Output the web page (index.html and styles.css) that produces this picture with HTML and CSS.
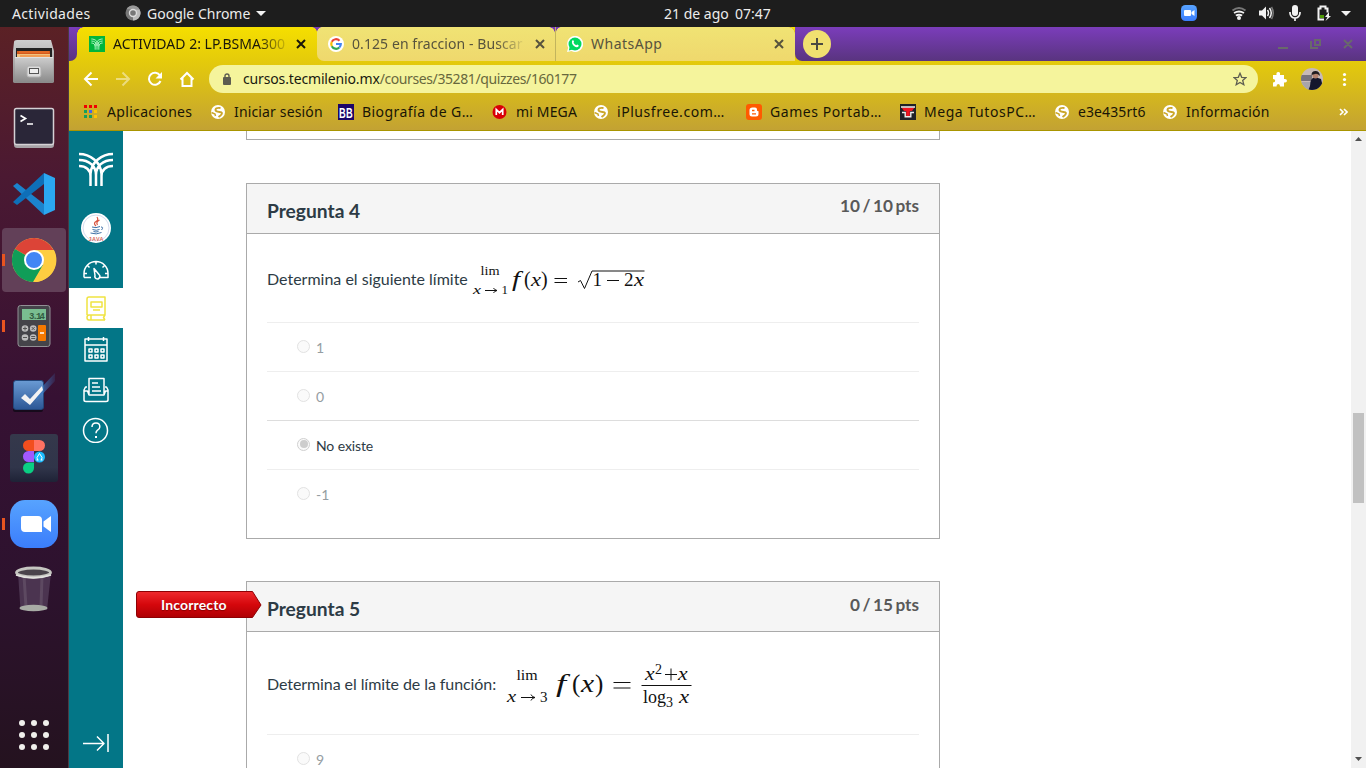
FILE: index.html
```html
<!DOCTYPE html>
<html lang="es">
<head>
<meta charset="utf-8">
<title>ACTIVIDAD 2: LP.BSMA300</title>
<link rel="stylesheet" href="styles.css">
</head>
<body>
<svg width="0" height="0" class="defs"><defs>
<linearGradient id="metal" x2="0" y2="1"><stop stop-color="#cecece"/><stop offset="1" stop-color="#8b8b8b"/></linearGradient>
<linearGradient id="blue" x2="0" y2="1"><stop stop-color="#57a3ff"/><stop offset="1" stop-color="#3b7dfb"/></linearGradient>
<linearGradient id="check" x2="0" y2="1"><stop stop-color="#6a9bd4"/><stop offset="1" stop-color="#2c5795"/></linearGradient>
<linearGradient id="trail"><stop stop-color="#3c78c0"/><stop offset="1" stop-color="#3c78c0" stop-opacity=".15"/></linearGradient>
<linearGradient id="fig" x2="0" y2="1"><stop stop-color="#35384b"/><stop offset=".7" stop-color="#30354a"/><stop offset="1" stop-color="#1e2236"/></linearGradient>
<symbol id="globe" viewBox="0 0 16 16"><circle cx="8" cy="8" r="7" fill="#fff"/><path d="M10.500 4Q6 3.500 5.500 5.500T9.500 8t1 3.500L8.500 13" fill="none" stroke="#cba72a" stroke-width="1.900"/><path d="m1.500 8.500 3.500 1.500.5 2" fill="none" stroke="#cba72a" stroke-width="1.500"/></symbol>
<symbol id="close" viewBox="0 0 10 10"><path d="m1 1 8 8m0-8-8 8" fill="none" stroke="currentColor" stroke-width="2"/></symbol>
<symbol id="palm" viewBox="0 0 34 36"><g fill="none" stroke="currentColor" stroke-width="2.500"><path d="M0 3c11 0 22 8 22.500 20v12M34 3C23 3 12 11 11.500 23v12M0 9c10 0 17 6 17 15v11M34 9c-10 0-17 6-17 15M0 15c7 0 11.500 4 11.500 10M34 15c-7 0-11.500 4-11.500 10"/></g></symbol>
</defs></svg>

<header class="topbar">
  <span class="activities">Actividades</span>
  <svg class="app-icon" width="16" height="16"><circle cx="8" cy="8" r="7.500" fill="#777"/><path d="M8 8V15.500A7.500 7.500 0 0 0 14.500 4.200H8z" fill="#bbb"/><path d="M1.500 4.200A7.500 7.500 0 0 1 14.500 4.200H8z" fill="#999"/><circle cx="8" cy="8" r="3.500" fill="#777" stroke="#ddd" stroke-width="1.400"/></svg>
  <span class="app-name">Google Chrome</span>
  <svg class="caret" width="10" height="6"><path d="M0 0h10L5 5z" fill="#f2f2f2"/></svg>
  <span class="date">21 de ago</span><span class="time">07:47</span>
  <svg class="tray" width="186" height="26" viewBox="1180 0 186 26">
    <rect x="1181" y="5" width="16" height="16" rx="4.500" fill="url(#blue)"/><rect x="1184" y="10" width="7" height="6" rx="1" fill="#fff"/><path d="m1191.500 12 3-2v6l-3-2z" fill="#fff"/>
    <g fill="none" stroke="#f2f2f2" stroke-width="1.800"><path d="M1232.500 10.500q6.500-5 13 0" stroke="#777"/><path d="M1234 13q5-3 10 0M1235.800 15.500q3.200-1.500 6.400 0"/></g><circle cx="1239" cy="18" r="2" fill="#f2f2f2"/>
    <path d="M1259 10.500h3l4-4v13l-4-4h-3z" fill="#f2f2f2"/><path d="M1267.500 10q2 3 0 6M1269.500 8q3.500 5 0 10" fill="none" stroke="#f2f2f2" stroke-width="1.500"/><path d="M1271.500 7q3.500 6 0 12" fill="none" stroke="#777" stroke-width="1.500"/>
    <rect x="1292" y="5" width="6" height="11" rx="3" fill="#f2f2f2"/><path d="M1290 12v1a5 5 0 0 0 10 0v-1M1295 18v3" fill="none" stroke="#f2f2f2" stroke-width="1.700"/>
    <path d="M1324 19.500h-5.500V8.500h2v-2h5v2h2v4" fill="none" stroke="#f2f2f2" stroke-width="2"/><rect x="1320" y="15" width="4" height="3" fill="#4e9a06"/><path d="m1329 12-4 5h2.500l-2 4 5.500-5h-2z" fill="#f2f2f2"/>
    <path d="M1341 11h10l-5 5z" fill="#f2f2f2"/>
  </svg>
</header>

<div class="desktop">
<nav class="dock">
  <svg class="tile" viewBox="2 30 64 64"><path d="M17 40h34l3 11v31a2 2 0 0 1-2 1H15a2 2 0 0 1-2-1V51l1-9q0-2 3-2z" fill="url(#metal)"/><path d="M16 48h36v10H16z" fill="#222"/><path d="M17 51h33v7H17z" fill="#d35a1e"/><path d="M17 54h33v4H17z" fill="#f2c27d"/><path d="M19 52h30M20 56h30" stroke="#f47b2c"/><path d="M15 57h38v25H15z" fill="url(#metal)"/><path d="M15 57.500h38" stroke="#e2e2e2"/><rect x="27" y="66" width="14" height="11" rx="2" fill="#ddd" stroke="#b0b0b0"/><rect x="29.500" y="68.500" width="9" height="5" fill="#eee" stroke="#555"/></svg>
  <svg class="tile" viewBox="2 96 64 64"><rect x="14" y="109" width="40" height="39" rx="3" fill="#a7a3a7"/><rect x="14.500" y="108.500" width="39" height="36" rx="2" fill="#2a2638" stroke="#d5d1d5" stroke-width="1.500"/><path d="m20.500 115.500 5 3-5 3M27 124h6" fill="none" stroke="#fff" stroke-width="1.700"/></svg>
  <svg class="tile" viewBox="2 162 64 64"><path d="m13 186 4-3 27 21v11z" fill="#1b83cd"/><path d="m13 202 4 3 27-21v-11z" fill="#0e6fb8"/><path d="m44 173 11 5v32l-11 5z" fill="#2ba7f1"/></svg>
  <svg class="tile active" viewBox="2 228 64 64"><circle cx="34" cy="260" r="22" fill="#fc4"/><path d="M34 260 14.900 249A22 22 0 0 1 53.500 250H34z" fill="#dc4437"/><path d="M34 260 14.900 249A22 22 0 0 0 33 282l10-17z" fill="#109d58"/><path d="m34 250 20 0a22 22 0 0 1-20 32l9-17z" fill="#fecd41"/><circle cx="34" cy="260" r="10" fill="#fff"/><circle cx="34" cy="260" r="8" fill="#4286f5"/><path class="run" d="M2 254h3v12H2z"/></svg>
  <svg class="tile" viewBox="2 294 64 64"><rect x="18" y="305.500" width="32" height="41" rx="2.500" fill="#45444a" stroke="#929095"/><rect x="22" y="309" width="24" height="11" fill="#79bd90"/><text x="29" y="318.500" textLength="16" class="lcd">3.14</text><g fill="#bdbcbd"><circle cx="25" cy="328.500" r="3.300"/><circle cx="33.200" cy="328.500" r="3.300"/><circle cx="25" cy="337.500" r="3.300"/><circle cx="33.200" cy="337.500" r="3.300"/></g><path d="M23 328.500h4m-2-2v4M31.700 327l3 3m0-3-3 3M23 337.500h4M31.200 336.500h4m-4 2h4" stroke="#555" fill="none"/><rect x="38" y="325" width="8" height="16" rx="1" fill="#f57900"/><path d="M40 333h4" stroke="#fff" stroke-width="1.500"/><path class="run" d="M2 320h3v12H2z"/></svg>
  <svg class="tile" viewBox="2 360 64 64"><rect x="13" y="408" width="30" height="4" rx="2" fill="#160a1b"/><rect x="13.500" y="380.500" width="30" height="29" rx="2.500" fill="url(#check)" stroke="#23477a"/><path d="m40 389 15-16v8L36 401z" fill="url(#trail)"/><path d="m21 398 4-4 5 5 12-13 1 4-13 15z" fill="#f3f3f3"/></svg>
  <svg class="tile" viewBox="2 426 64 64"><rect x="10" y="434" width="48" height="48" rx="3" fill="url(#fig)"/><path d="M34 440h-5.500a5.500 5.500 0 0 0 0 11H34z" fill="#f24e1e"/><path d="M34 440h5.500a5.500 5.500 0 0 1 0 11H34z" fill="#ff7262"/><path d="M34 451h-5.500a5.500 5.500 0 0 0 0 11H34z" fill="#a259ff"/><circle cx="39.500" cy="457" r="5.500" fill="#1abcfe"/><path d="M34 462.500h-5.500a5.500 5.500 0 1 0 5.500 5.500z" fill="#0acf83"/><path d="m39.500 453.500-2.500 4 .5 2.500M39.500 453.500l2.500 4-.5 2.500M36.500 460h2M40.500 460h2" fill="none" stroke="#fff"/></svg>
  <svg class="tile" viewBox="2 492 64 64"><rect x="10" y="500" width="48" height="48" rx="15" fill="url(#blue)"/><path d="M21 516h17q4 0 4 4v12H25q-4 0-4-4v-10q0-2 2-2z" fill="#fff"/><path d="m43.500 521.500 7.500-5.500v16l-7.500-5.500z" fill="#fff"/><path class="run" d="M2 518h3v12H2z"/></svg>
  <svg class="tile" viewBox="2 558 64 64"><path d="m18 573 2.500 37h26.500L51 573z" fill="#4b3450"/><path d="m24 576 2 31m16-31-1 31" stroke="#5d4961" stroke-width="3"/><ellipse cx="33.500" cy="608" rx="14" ry="3.300" fill="#a8aba5"/><ellipse cx="33.500" cy="572.500" rx="17" ry="4.500" fill="#4a444b" stroke="#c6c6c1" stroke-width="2.800"/><path d="M16 575q17 6 35 0" fill="none" stroke="#e3e3df" stroke-width="1.500"/></svg>
  <svg class="apps" width="32" height="32"><g fill="#f0eeec"><circle cx="4" cy="4" r="3"/><circle cx="16" cy="4" r="3"/><circle cx="28" cy="4" r="3"/><circle cx="4" cy="16" r="3"/><circle cx="16" cy="16" r="3"/><circle cx="28" cy="16" r="3"/><circle cx="4" cy="28" r="3"/><circle cx="16" cy="28" r="3"/><circle cx="28" cy="28" r="3"/></g></svg>
</nav>

<section class="browser">
<div class="chrome">
  <div class="tabs">
    <div class="corner"></div>
    <div class="tab current"><svg width="16" height="16" class="palm-fav"><rect width="16" height="16" fill="#00b53c"/><use href="#palm" x="2" y="2" width="12" height="12"/></svg><span class="tab-title t1">ACTIVIDAD 2: LP.BSMA300</span><svg class="x" width="10" height="10"><use href="#close"/></svg></div>
    <div class="tab second"><svg width="16" height="16"><circle cx="8" cy="8" r="8" fill="#fff"/><g fill="none" stroke-width="2.200"><path d="M11.500 4.700A4.800 4.800 0 0 0 3.800 5.800" stroke="#ea4335"/><path d="M3.800 5.800a4.800 4.800 0 0 0 0 4.400" stroke="#fbbc05"/><path d="M3.800 10.200a4.800 4.800 0 0 0 7.500 1.300" stroke="#34a853"/><path d="M11.300 11.500A5 5 0 0 0 12.800 8H8" stroke="#4285f4"/></g></svg><span class="tab-title t2">0.125 en fraccion - Buscar</span><svg class="x" width="10" height="10"><use href="#close"/></svg></div>
    <div class="tab third"><svg width="16" height="16"><path d="M0 16 1.200 11.800A8 8 0 1 1 4.500 15z" fill="#fff"/><circle cx="8" cy="8" r="6.500" fill="#00d95f"/><path d="M1.800 14.400 2.900 10l3 3.500z" fill="#00d95f"/><path d="M5.200 4.500q1.300-.9 1.800 1l-.4 1.200q.8 1.700 2.600 2.500l1.100-.7q2 .7 1.300 1.800-1.500 1.700-4.300 0Q4 7.500 5.200 4.500z" fill="#fff"/></svg><span class="tab-title t3">WhatsApp</span><svg class="x" width="10" height="10"><use href="#close"/></svg></div>
    <div class="tab-rest">
      <svg class="plus" width="28" height="28"><circle cx="14" cy="14" r="14" fill="#f0e070"/><path d="M14 8v12M8 14h12" stroke="#4a4a42" stroke-width="2"/></svg>
      <svg class="win" width="76" height="12" viewBox="0 0 76 12"><g fill="none" stroke="#69696b" stroke-width="2"><path d="M0 10h10M37 2h5v5h-5zM33 3v7h7M66 2l8 8m0-8-8 8"/></g></svg>
    </div>
  </div>
  <div class="toolbar">
    <svg class="navs" width="128" height="36" viewBox="69 61 128 36"><g fill="none" stroke="#fff" stroke-width="2"><path d="M98 79H85m6.500-6.500L85 79l6.500 6.500"/><path d="M116 79h13m-6.500-6.500L129 79l-6.500 6.500" opacity=".45"/><path d="M160 75.500A6 6 0 1 0 160.500 81"/><path d="M180.500 79.500 187 73l6.500 6.500M182.500 78v8h9v-8"/></g><path d="M162 72v6.500h-6.500z" fill="#fff"/></svg>
    <div class="omnibox"><svg width="10" height="12"><rect y="4" width="8" height="8" rx="1" fill="#5d5d50"/><path d="M2 5V3a2 2 0 0 1 4 0v2" fill="none" stroke="#5d5d50" stroke-width="1.400"/></svg><span class="url"><b>cursos.tecmilenio.mx</b>/courses/35281/quizzes/160177</span><svg class="star" width="14" height="14" viewBox="0 0 14 14"><path d="m7 1.300 1.700 4 4.300.3-3.300 2.800 1.100 4.300L7 10.400l-3.800 2.300 1.100-4.300L1 5.600l4.300-.3z" fill="none" stroke="#5d5d50" stroke-width="1.300"/></svg></div>
    <svg class="tools" width="108" height="36" viewBox="1258 61 108 36"><path d="M1273 75h3.500q-.5-3 1.800-3t1.700 3h4v4q3-.5 3 1.800t-3 1.700v4h-4q.2-2.500-1.700-2.500t-1.800 2.500H1273v-4q2.200 0 2.200-1.700t-2.200-1.800z" fill="#fff"/><clipPath id="ava"><circle cx="1312" cy="79" r="11"/></clipPath><g clip-path="url(#ava)"><path d="M1300 67h24v24h-24z" fill="#c7b9b8"/><path d="M1300 75h12v6h-12z" fill="#77727c"/><path d="M1300 82h11v9h-11z" fill="#a8a5aa"/><path d="M1310 86q0-8 5-9l6 2 3 12h-16z" fill="#15162d"/><circle cx="1315.500" cy="75.500" r="3" fill="#b58270"/><path d="M1311.500 75q0-4 4-4t4.500 5q-3-3-5-2z" fill="#211c22"/></g><g fill="#fff"><circle cx="1344.500" cy="74.500" r="1.600"/><circle cx="1344.500" cy="79.500" r="1.600"/><circle cx="1344.500" cy="84.500" r="1.600"/></g></svg>
  </div>
  <div class="bookmarks">
    <div class="bm b1"><svg width="14" height="14"><g><path d="M1 0h3v3H1zM6 0h3v3H6zM11 0h3v3h-3z" fill="#f00000"/><path d="M1 5h3v3H1zM1 10h3v3H1zM6 10h3v3H6z" fill="#16a05d"/><path d="M6 5h3v3H6z" fill="#4865e8"/><path d="M11 5h3v3h-3zM11 10h3v3h-3z" fill="#ffc400"/></g></svg><span>Aplicaciones</span></div>
    <div class="bm b2"><svg width="16" height="16"><use href="#globe"/></svg><span>Iniciar sesión</span></div>
    <div class="bm b3"><svg width="16" height="16"><rect width="16" height="16" fill="#1b0569"/><text x="1" y="14" textLength="14" lengthAdjust="spacingAndGlyphs" class="bb">BB</text></svg><span>Biografía de G…</span></div>
    <div class="bm b4"><svg width="15" height="16"><circle cx="7.500" cy="8" r="7" fill="#d90007"/><path d="M4.300 11V5.500L7.500 8.700l3.200-3.200V11" fill="none" stroke="#fff" stroke-width="1.700"/></svg><span>mi MEGA</span></div>
    <div class="bm b5"><svg width="16" height="16"><use href="#globe"/></svg><span>iPlusfree.com…</span></div>
    <div class="bm b6"><svg width="16" height="16"><rect width="16" height="16" rx="3" fill="#ff5a00"/><path d="M6.500 3.500H9q2 0 2 2v1q0 .7 1.500.8v2.700q0 2.500-2.500 2.500H6q-2.500 0-2.500-2.500V6q0-2.500 3-2.500z" fill="#fff"/><path d="M6 6.500h2.500M6 9.800h4" stroke="#ff5a00" stroke-width="1.300"/></svg><span>Games Portab…</span></div>
    <div class="bm b7"><svg width="16" height="16"><rect width="16" height="16" fill="#202127"/><path d="M1.500 3.500h13L12 7H9.800v5H6.200V7H4z" fill="#f01622"/><path d="M1 3h14M2 8.500h3.200v4.200h5.600V8.500H14" stroke="#eee" stroke-width="1.400" fill="none"/></svg><span>Mega TutosPC…</span></div>
    <div class="bm b8"><svg width="16" height="16"><use href="#globe"/></svg><span>e3e435rt6</span></div>
    <div class="bm b9"><svg width="16" height="16"><use href="#globe"/></svg><span>Información</span></div>
    <svg class="more" width="9" height="8"><path d="m1 1 3 3-3 3m4-6 3 3-3 3" fill="none" stroke="#fff" stroke-width="1.600"/></svg>
  </div>
</div>

<div class="page">
  <nav class="rail">
    <svg class="brand" width="34" height="36"><use href="#palm"/></svg>
    <div class="cell avatar"><svg width="30" height="30"><circle cx="15" cy="15" r="15" fill="#fff"/><circle cx="15" cy="15" r="13" fill="none" stroke="#d7dcee"/><path d="M16 4q2 3-1 4.500t0 4.500M18.500 7q-4 2-2 5" fill="none" stroke="#d8543f" stroke-width="1.200"/><path d="M11 14q4 1.500 8-.500M11.500 16.500q4 1.500 7 0M12.500 18.500q2.500 1 5 0M9.500 20q6 2 11-.5M20 14q3 0 .5 3" fill="none" stroke="#3f72a7"/><text x="7.500" y="27.500" textLength="15" class="java">JAVA</text></svg></div>
    <div class="cell"><svg width="28" height="28" viewBox="82 255.500 28 28" class="line"><path d="M84 279v-4a12 12 0 0 1 24 0v4h-8M84 279h7M96 263v3M87.500 267l2 2M104.500 267l-2 2M84 275h3M105 275h3M94 270l1 7a2.500 2.500 0 1 0 4-1z"/></svg></div>
    <div class="cell selected"><svg width="28" height="28" viewBox="82 294 28 28" class="line"><path d="M87 315V299q0-2 2-2h16v18H89q-2 0-2 2.500t2 2.500h16M105 315l-1.500 2.500 1.500 2.500M91 315v5M91 302h11v5H91zM93 310h7"/></svg></div>
    <div class="cell"><svg width="28" height="28" viewBox="82 334 28 28" class="line"><path d="M85 339h22v22H85zM85 345h22M88.500 337v4M103.500 337v4"/><path d="M89 349h3v3h-3zm6 0h3v3h-3zm6 0h3v3h-3zM89 355h3v3h-3zm6 0h3v3h-3zm6 0h3v3h-3z"/></svg></div>
    <div class="cell tall"><svg width="28" height="28" viewBox="82 375 28 28" class="line"><path d="M89 394v-15.500h15V394M92 383h6M92 387h8M92 391h9M87 387h-1.500L84 390v10q0 1.500 2 1.500h20q2 0 2-1.500v-10l-1.500-3H105M84 391h3.500l1.500 4h15l1.500-4h3"/></svg></div>
    <div class="cell"><svg width="28" height="28" viewBox="82 415 28 28" class="line"><circle cx="95.500" cy="430.500" r="12"/><path d="M92 427q0-4 4-4t3.800 4q0 2-2.500 3.300-1.300.8-1.300 3"/><path d="M96 436v2" stroke-width="2"/></svg></div>
    <svg class="collapse line" width="28" height="20"><path d="M1 10.500h21M15 3.500l7 7-7 7M26 1v18"/></svg>
  </nav>
  <main class="content">
    <div class="card previous"></div>
    <article class="card">
      <header class="card-head"><h2>Pregunta 4</h2><span class="points">10 / 10 pts</span></header>
      <div class="question">
        <p class="prompt"><span>Determina el siguiente límite</span>
        <svg class="formula f1" width="180" height="40" viewBox="471 258 180 40"><text x="480.500" y="275" textLength="19" lengthAdjust="spacingAndGlyphs" font-size="13">lim</text><text x="473" y="293.500" class="it" font-size="13" lengthAdjust="spacingAndGlyphs" textLength="8">x</text><text x="501.500" y="294" font-size="13">1</text><path d="M485 290.500h12m-3.500-2.500q1 2 3.500 2.500-2.500.5-3.500 2.500"/><text x="512" y="286" class="it" font-size="20" lengthAdjust="spacingAndGlyphs" textLength="8">f</text><text x="524" y="286" font-size="20">(</text><text x="531" y="286" class="it" font-size="19" lengthAdjust="spacingAndGlyphs" textLength="10">x</text><text x="541" y="286" font-size="20">)</text><path d="M554.500 278.500h12.500M554.500 282.500h12.500"/><path d="m578 282 2.500-1.500 4 8 7.500-17.500H644.500" stroke-width="1.300"/><text x="592.500" y="286" font-size="19">1</text><path d="M607 280.500h12"/><text x="624" y="286" font-size="19">2</text><text x="634" y="286" class="it" font-size="19" lengthAdjust="spacingAndGlyphs" textLength="10">x</text></svg></p>
        <div class="answers">
          <div class="answer"><i class="radio"></i><span>1</span></div>
          <div class="answer"><i class="radio"></i><span>0</span></div>
          <div class="answer chosen"><i class="radio on"></i><span>No existe</span></div>
          <div class="answer"><i class="radio"></i><span>-1</span></div>
        </div>
      </div>
    </article>
    <article class="card">
      <div class="flag"><svg width="126" height="28"><defs><linearGradient id="red" x2="0" y2="1"><stop stop-color="#ef2a2d"/><stop offset=".5" stop-color="#d5070c"/><stop offset="1" stop-color="#ae0004"/></linearGradient></defs><path d="M3 .500h113.500l8.500 13.500-8.500 12.500H3Q.5 26.500 .5 24V3Q.5.5 3 .5z" fill="url(#red)" stroke="#8e0004"/></svg><span>Incorrecto</span></div>
      <header class="card-head"><h2>Pregunta 5</h2><span class="points low">0 / 15 pts</span></header>
      <div class="question second-question">
        <p class="prompt"><span>Determina el límite de la función:</span>
        <svg class="formula f2" width="192" height="56" viewBox="504 655 192 56"><text x="516.500" y="680" textLength="21" lengthAdjust="spacingAndGlyphs" font-size="15">lim</text><text x="507" y="702" class="it" font-size="16" lengthAdjust="spacingAndGlyphs" textLength="9">x</text><path d="M521 697.500h14m-4-3q1 2.500 4 3-3 .5-4 3"/><text x="540" y="702" font-size="15">3</text><text x="556" y="692" class="it" font-size="25" lengthAdjust="spacingAndGlyphs" textLength="10">f</text><text x="572" y="692" font-size="25">(</text><text x="581" y="692" class="it" font-size="25" lengthAdjust="spacingAndGlyphs" textLength="13">x</text><text x="595" y="692" font-size="25">)</text><path d="M613.500 682.500h17M613.500 688h17" stroke-width="1.300"/><path d="M641.500 685.500h50" stroke-width="1.700"/><text x="645" y="680" class="it" font-size="19" lengthAdjust="spacingAndGlyphs" textLength="9.500">x</text><text x="655" y="674" font-size="14">2</text><path d="M665 674.500h12M671 668.500v12" stroke-width="1.200"/><text x="678" y="680" class="it" font-size="19" lengthAdjust="spacingAndGlyphs" textLength="9.500">x</text><text x="643" y="703" font-size="18" textLength="23">log</text><text x="666" y="707" font-size="14">3</text><text x="679" y="703" class="it" font-size="19" lengthAdjust="spacingAndGlyphs" textLength="10">x</text></svg></p>
        <div class="answers"><div class="answer"><i class="radio"></i><span>9</span></div></div>
      </div>
    </article>
  </main>
  <div class="scroll"><svg width="15" height="17"><path d="M4 10 7.500 6l3.500 4z" fill="#505050"/></svg><div class="thumb"></div><svg class="down" width="15" height="17"><path d="m4 6 3.500 4L11 6z" fill="#505050"/></svg></div>
</div>
</section>
</div>
</body>
</html>
```
FILE: styles.css
```css
* { box-sizing: border-box; }
body { margin: 0; width: 1366px; height: 768px; overflow: hidden; background: #fff; font-family: "Noto Sans", sans-serif; font-size: 14px; }
svg { display: block; flex: none; }
.defs { position: absolute; }
.topbar { height: 27px; background: #1d1d1d; color: #ececec; display: flex; align-items: center; white-space: nowrap; padding: 0 0 1px 12px; }
.activities { width: 113px; letter-spacing: .35px; }
.app-name { width: 105px; margin-left: 6px; }
.caret { margin-left: 4px; margin-top: 2px; }
.date { width: 71px; margin-left: 398px; }
.time { width: 37px; }
.tray { margin-left: auto; }
.desktop { display: flex; height: 741px; }
.dock { width: 69px; border-right: 1px solid #4b3a42; background: linear-gradient(#5b2125, #4b1932 20%, #361133 50%, #2d122e 75%, #24121f); padding: 3px 0 0 2px; display: flex; flex-direction: column; gap: 2px; }
.tile { width: 64px; height: 64px; }
.tile.active { background: #624058; border-radius: 4px; }
.run { fill: #e95420; }
.lcd { font: bold 9px "Liberation Mono", monospace; fill: #315c41; }
.bb { font: bold 14px "Liberation Sans", sans-serif; fill: #fff; }
.apps { margin: auto 0 17px 16px; }
.browser { width: 1297px; display: flex; flex-direction: column; }
.chrome { height: 104px; border-bottom: 1px solid #a99500; background: linear-gradient(#f5df00, #e4ca0b 34%, #c3a233); }
.tabs { display: flex; height: 34px; }
.corner { width: 8px; background: linear-gradient(#7b3dbb, #59347f); border-bottom-right-radius: 7px; }
.tab { height: 34px; display: flex; align-items: center; position: relative; }
.tab.current { width: 240px; padding-left: 12px; background: radial-gradient(circle at 7px 7px, transparent 6.5px, #783cb5 7px) 0 0 / 7px 7px no-repeat, radial-gradient(circle at 0 5px, transparent 4.5px, #783cb5 5px) 100% 0 / 5px 5px no-repeat; color: #19170a; }
.tab.second { width: 239px; padding-left: 11px; border-right: 1px solid #c2b45d; border-radius: 0 0 0 7px; }
.tab.third { width: 239px; padding-left: 11px; border-radius: 0 7px 0 0; }
.tab.second, .tab.third { color: #57533d; background: radial-gradient(circle at 5px 5px, transparent 4.5px, #783cb5 5px) 0 0 / 5px 5px no-repeat, radial-gradient(circle at 0 6px, transparent 5.5px, #783cb5 6px) 100% 0 / 6px 6px no-repeat, linear-gradient(#f0e374, #efd86d); }
.palm-fav { color: #caffd9; }
.tab-title { margin-left: 8px; white-space: nowrap; width: 174px; padding-bottom: 2px; }
.tab-title + .x { margin-left: 9px; }
.t1 { width: 180px; letter-spacing: .02px; -webkit-mask-image: linear-gradient(90deg, #000 80%, transparent 99%); mask-image: linear-gradient(90deg, #000 80%, transparent 99%); }
.t1 + .x { margin-left: 3px; }
.t2 { letter-spacing: .08px; -webkit-mask-image: linear-gradient(90deg, #000 83%, transparent); mask-image: linear-gradient(90deg, #000 83%, transparent); }
.t3 { letter-spacing: .5px; }
.tab-rest { flex: 1; display: flex; align-items: center; background: linear-gradient(#7b3dbb, #59347f); border-bottom-left-radius: 7px; padding: 0 12px 0 8px; }
.win { margin-left: auto; }
.toolbar { height: 36px; display: flex; align-items: center; }
.omnibox { height: 28px; width: 1049px; margin-left: 12px; background: #f5f49c; border-radius: 14px; display: flex; align-items: center; padding: 0 11px 0 14px; }
.url { margin-left: 10px; color: #68683d; letter-spacing: -.4px; padding-bottom: 2px; }
.url b { font-weight: 400; color: #191a10; letter-spacing: -.15px; }
.star { margin-left: auto; }
.bookmarks { display: flex; align-items: center; height: 30px; padding-left: 14px; color: #191506; }
.bm { display: flex; align-items: center; white-space: nowrap; }
.bm span { margin-left: 8px; padding-bottom: 2px; }
.b1 { width: 127px; letter-spacing: .33px; }
.b1 span { margin-left: 10px; }
.b2 { width: 128px; letter-spacing: .15px; }
.b2 span { margin-left: 8px; }
.b3 { width: 154px; letter-spacing: .45px; }
.b4 { width: 101px; letter-spacing: .15px; }
.b4 span { margin-left: 9px; }
.b5 { width: 153px; letter-spacing: .55px; }
.b6 { width: 154px; letter-spacing: .55px; }
.b7 { width: 154px; letter-spacing: .55px; }
.b8 { width: 108px; letter-spacing: .1px; }
.b9 { letter-spacing: .25px; }
.more { margin: 0 18px 0 auto; }
.page { height: 637px; display: flex; overflow: hidden; background: #fff; }
.rail { width: 54px; background: #037687; display: flex; flex-direction: column; align-items: center; color: #fff; }
.brand { margin: 20px 0; }
.cell { width: 54px; height: 40px; flex: none; display: flex; align-items: center; justify-content: center; }
.cell.avatar, .cell.tall { height: 41px; }
.selected { background: #fff; color: #f0e342; }
.line { fill: none; stroke: currentColor; stroke-width: 1.5; stroke-linejoin: round; }
.java { font: bold 5.5px "Liberation Sans", sans-serif; fill: #d86d5f; }
.collapse { margin-top: auto; margin-bottom: 15px; }
.content { width: 1228px; padding-left: 123px; font-family: Lato, sans-serif; color: #2d3b45; }
.card { width: 694px; border: 1px solid #aaa; margin-bottom: 42px; position: relative; height: 356px; }
.card.previous { height: 9px; border-top: 0; margin-bottom: 43px; }
.card-head { height: 50px; background: #f5f5f5; border-bottom: 1px solid #aaa; display: flex; justify-content: space-between; padding: 0 20px; }
h2 { margin: 13px 0 0; font-size: 19.2px; line-height: 27px; font-weight: 700; }
.points { color: #595959; font-size: 17.2px; font-weight: 700; line-height: 24px; margin-top: 10px; word-spacing: -1.7px; }
.points.low { margin-top: 11px; }
.question { padding: 0 20px; }
.prompt { margin: 0; height: 88px; display: flex; align-items: center; font-size: 16px; }
.formula { font-family: "Liberation Serif", serif; fill: #111; }
.formula text { stroke: none; }
.formula path { fill: none; stroke: #111; stroke-width: 1; }
.it { font-style: italic; }
.f1 { margin-left: 3px; }
.f2 { margin-left: 8px; }
.second-question .prompt { height: 102px; letter-spacing: -.08px; }
.answer { height: 49px; border-top: 1px solid #eee; padding: 0 0 2px 30px; display: flex; align-items: center; font-size: 14px; color: #959da2; }
.answer span { margin: 3px 0 0 6px; }
.answer.chosen { color: #2d3b45; border-top-color: #ddd; letter-spacing: -.1px; }
.radio { width: 13px; height: 13px; border: 1px solid #e2e2e2; border-radius: 50%; background: #fafafa; display: flex; align-items: center; justify-content: center; }
.radio.on { border-color: #d0d0d0; }
.radio.on::after { content: ""; width: 8px; height: 8px; border-radius: 50%; background: #cdcdcd; }
.flag { position: absolute; left: -111px; top: 9px; width: 126px; height: 28px; color: #fff; font-size: 14px; font-weight: 700; text-shadow: 0 1px 1px #800; }
.flag span { position: absolute; left: 25px; top: 5px; letter-spacing: .15px; }
.scroll { width: 15px; background: #f1f1f1; display: flex; flex-direction: column; align-items: center; }
.thumb { width: 11px; height: 90px; background: #c1c1c1; margin-top: 265px; }
.down { margin-top: auto; }
```
